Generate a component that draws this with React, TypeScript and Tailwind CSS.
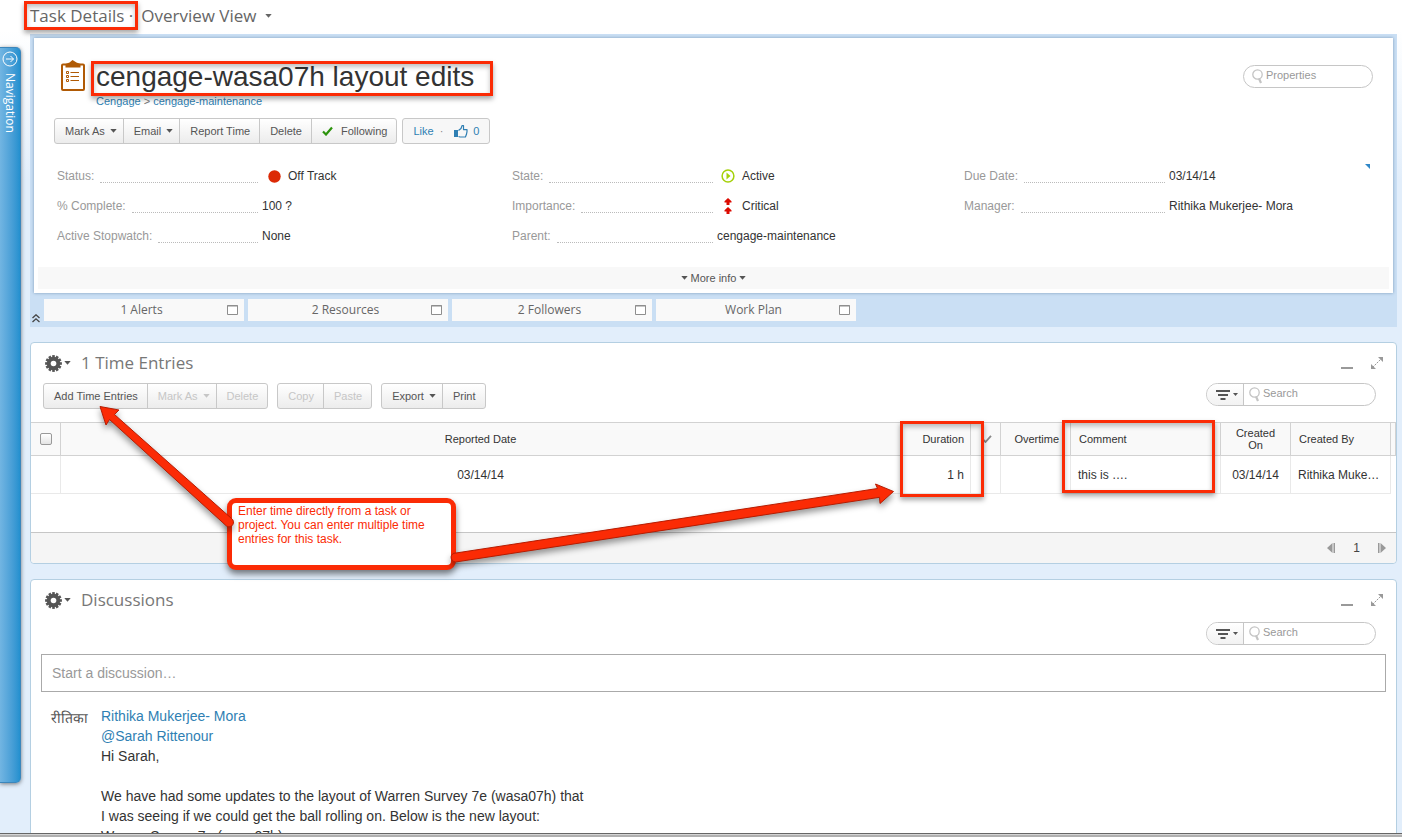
import type { ReactNode } from 'react';

const properties: { label: string; value: string; icon?: 'offTrack' | 'active' | 'critical' }[][] = [
  [
    { label: 'Status:', value: 'Off Track', icon: 'offTrack' },
    { label: '% Complete:', value: '100 ?' },
    { label: 'Active Stopwatch:', value: 'None' },
  ],
  [
    { label: 'State:', value: 'Active', icon: 'active' },
    { label: 'Importance:', value: 'Critical', icon: 'critical' },
    { label: 'Parent:', value: 'cengage-maintenance' },
  ],
  [
    { label: 'Due Date:', value: '03/14/14' },
    { label: 'Manager:', value: 'Rithika Mukerjee- Mora' },
  ],
];

const tabs = ['1 Alerts', '2 Resources', '2 Followers', 'Work Plan'];

function Caret({ className = '' }: { className?: string }) {
  return (
    <svg className={`shrink-0 ${className}`} width="7" height="4" viewBox="0 0 7 4" aria-hidden="true">
      <path d="M.300 0h6.400L3.500 3.700z" fill="currentColor" />
    </svg>
  );
}

function ValueIcon({ name }: { name: 'offTrack' | 'active' | 'critical' }) {
  if (name === 'offTrack') {
    return (
      <svg className="ml-[6px] mr-[7px] shrink-0" width="13" height="13" viewBox="0 0 13 13" aria-hidden="true">
        <circle cx="6.5" cy="6.5" r="6.2" fill="#dc2a06" />
      </svg>
    );
  }
  if (name === 'active') {
    return (
      <svg className="ml-1 mr-[7px] shrink-0" width="14" height="14" viewBox="0 0 14 14" aria-hidden="true">
        <circle cx="7" cy="7" r="5.9" fill="none" stroke="#a5d10a" strokeWidth="1.5" />
        <path d="M5.5 3.5v7l4-3.5z" fill="#a5d10a" />
      </svg>
    );
  }
  return (
    <svg className="ml-1 mr-[7px] shrink-0" width="14" height="16" viewBox="0 0 14 16" aria-hidden="true">
      <path
        d="M7 0l3.500 3.300v1.200h-2V7h-3V4.500h-2V3.300zM7 9l3.500 3.300v1.200h-2V16h-3v-2.500h-2v-1.200z"
        fill="#dc0a00"
      />
    </svg>
  );
}

function ButtonGroup({ children }: { children: ReactNode }) {
  return (
    <div className="flex h-[26px] divide-x divide-[#c8c8c8] overflow-hidden rounded-[3px] border border-[#c8c8c8] bg-linear-to-b from-white to-[#ececec]">
      {children}
    </div>
  );
}

function ToolButton({ children, caret, disabled }: { children: ReactNode; caret?: boolean; disabled?: boolean }) {
  return (
    <button
      type="button"
      disabled={disabled}
      className={`flex items-center whitespace-nowrap pl-[10px] text-[11px] ${caret ? 'gap-[5px] pr-[6px]' : 'pr-[9px]'} ${
        disabled ? 'text-[#c6c6c6]' : 'text-[#555]'
      }`}
    >
      {children}
      {caret && <Caret />}
    </button>
  );
}

function Lens() {
  return (
    <svg className="shrink-0" width="11" height="15" viewBox="0 0 11 15" aria-hidden="true">
      <circle cx="5.500" cy="5.500" r="4.700" fill="none" stroke="#c4c4c4" strokeWidth="1.300" />
      <path d="M7 9.500l2 4.500" stroke="#c4c4c4" strokeWidth="2.200" />
    </svg>
  );
}

function SearchBox({ label }: { label: string }) {
  return (
    <div className="flex h-[23px] w-[170px] overflow-hidden rounded-full border border-[#c6c6c6] bg-white">
      <button
        type="button"
        aria-label="Filter"
        className="flex w-[37px] items-center justify-center gap-[3px] border-r border-[#c6c6c6] bg-linear-to-b from-white to-[#f2f2f2] pl-1 text-[#555]"
      >
        <svg width="14" height="10" viewBox="0 0 14 10" aria-hidden="true">
          <path d="M0 1h14M2 5h10M4.500 9h5" stroke="currentColor" strokeWidth="2" />
        </svg>
        <svg width="5" height="3" viewBox="0 0 5 3" aria-hidden="true">
          <path d="M0 0h5L2.500 3z" fill="currentColor" />
        </svg>
      </button>
      <label className="flex min-w-0 flex-1 items-center gap-[3px] pl-[5px]">
        <Lens />
        <input
          type="text"
          aria-label={label}
          placeholder="Search"
          className="h-full w-full min-w-0 pb-1 text-[11px] outline-none placeholder:text-[#999]"
        />
      </label>
    </div>
  );
}

function Gear() {
  return (
    <svg width="17" height="17" viewBox="-8.500 -8.500 17 17" aria-hidden="true">
      {[0, 30, 60, 90, 120, 150].map((deg) => (
        <rect key={deg} x="-1.300" y="-8.400" width="2.600" height="16.800" fill="#555" transform={`rotate(${deg})`} />
      ))}
      <circle r="6.700" fill="#555" />
      <circle r="2.800" fill="#fff" />
    </svg>
  );
}

function PanelHeader({ title }: { title: string }) {
  return (
    <div className="flex h-10 items-center pl-[14px] pr-[13px]">
      <button type="button" aria-label={`${title} options`} className="flex items-center gap-[2px] text-[#555]">
        <Gear />
        <Caret />
      </button>
      <h2 className="ml-[10px] font-['Open_Sans',sans-serif] text-[17px] text-[#777]">{title}</h2>
      <button type="button" aria-label="Minimize" className="ml-auto mt-[10px] h-[2px] w-3 bg-[#999]" />
      <button type="button" aria-label="Expand" className="ml-[18px] text-[#999]">
        <svg width="12" height="12" viewBox="0 0 12 12" aria-hidden="true">
          <path d="M7 0h5v5zM0 7v5h5z" fill="currentColor" />
          <path d="M1.500 10.500l9-9" stroke="currentColor" strokeDasharray="2 1" />
        </svg>
      </button>
    </div>
  );
}

// Red frame drawn over the element it calls out
function Highlight({ className }: { className: string }) {
  return (
    <span
      aria-hidden="true"
      className={`pointer-events-none absolute z-10 border-3 border-[#fb2b05] shadow-[0_3px_5px_rgba(0,0,0,0.35),inset_0_3px_5px_rgba(0,0,0,0.25)] ${className}`}
    />
  );
}

function Navigation() {
  return (
    <aside className="mb-[50px] mt-[47px] w-[21px] shrink-0 rounded-r-[5px] border-y border-r border-[#3c86bb] bg-linear-to-r from-[#72b5e2] to-[#2290cf] shadow-[0_1px_4px_rgba(0,0,0,0.5)]">
      <button type="button" className="flex w-full flex-col items-center gap-[6px] pt-[3px] text-white">
        <svg width="16" height="16" viewBox="0 0 16 16" fill="none" stroke="currentColor" aria-hidden="true">
          <circle cx="8" cy="8" r="7" />
          <path d="M4 8h7.500M8.500 5l3 3-3 3" />
        </svg>
        <span className="font-['Open_Sans',sans-serif] text-[12px] leading-[14px] [writing-mode:vertical-rl]">
          Navigation
        </span>
      </button>
    </aside>
  );
}

function TaskSummary() {
  return (
    <section className="bg-[#cadff4] px-1 pb-[6px] pt-1">
      <div className="relative bg-white p-1 pt-[21px] shadow-[0_0_3px_rgba(70,110,150,0.6)]">
        <div className="flex items-start pl-[23px] pr-4">
          <svg className="mt-px shrink-0" width="24" height="31" viewBox="0 0 24 31" aria-hidden="true">
            <rect x="1" y="4.500" width="22" height="25.500" rx="1" fill="#fff" stroke="#b05a05" strokeWidth="2" />
            <path d="M4.500 7.500V4L8.500 2.500 11.500 0 15.500 2.500 19.500 4v3.500z" fill="#b05a05" />
            <path d="M9.500 12.500H18M9.500 16.500H18M9.500 20.500H18" stroke="#b05a05" />
            <path d="M5.500 11.500h2v2h-2zM5.500 15.500h2v2h-2zM5.500 19.500h2v2h-2z" fill="none" stroke="#b05a05" />
          </svg>
          <div className="ml-[11px]">
            <div className="relative">
              <h1 className="whitespace-nowrap text-[28px] leading-[35px] text-[#333]">cengage-wasa07h layout edits</h1>
              <Highlight className="-left-[5px] -right-[19px] top-[2px] h-[35px]" />
            </div>
            <p className="text-[11px] leading-[14px] text-[#777]">
              <a href="#" className="text-[#2f7fb3]">
                Cengage
              </a>{' '}
              &gt;{' '}
              <a href="#" className="text-[#2f7fb3]">
                cengage-maintenance
              </a>
            </p>
          </div>
          <label className="ml-auto mt-[6px] flex h-[23px] w-[130px] items-center gap-[3px] rounded-full border border-[#c6c6c6] pl-2 pr-3">
            <Lens />
            <input
              type="text"
              aria-label="Properties"
              placeholder="Properties"
              className="h-full w-full min-w-0 pb-1 text-[11px] outline-none placeholder:text-[#999]"
            />
          </label>
        </div>

        <div className="mt-[10px] flex gap-[5px] pl-4">
          <ButtonGroup>
            <ToolButton caret>Mark As</ToolButton>
            <ToolButton caret>Email</ToolButton>
            <ToolButton>Report Time</ToolButton>
            <ToolButton>Delete</ToolButton>
            <ToolButton>
              <svg className="mr-2" width="11" height="10" viewBox="0 0 11 10" aria-hidden="true">
                <path d="M1 5.500l3 3L10 1.500" fill="none" stroke="#2c930c" strokeWidth="2.200" />
              </svg>
              Following
            </ToolButton>
          </ButtonGroup>
          <button
            type="button"
            className="flex h-[26px] items-center rounded-[3px] border border-[#c8c8c8] bg-[#f7f7f7] px-[10px] text-[11px] text-[#2f7fb3]"
          >
            Like
            <span className="mx-[6px] text-[#888]">·</span>
            <svg className="mx-[5px]" width="14" height="13" viewBox="0 0 14 13" aria-hidden="true">
              <path d="M0 5h4v7H0z" fill="currentColor" />
              <path
                d="M4.500 5.500L7 3.500 8 .600h1.500v4H13v2l-.600 3-1 2.400H6L4.500 11.500"
                fill="none"
                stroke="currentColor"
                strokeWidth="1.200"
                strokeLinejoin="round"
              />
            </svg>
            0
          </button>
        </div>

        <div className="mt-[25px] grid grid-cols-[455fr_452fr_408fr] pl-[19px] pr-[17px] text-[12px] leading-[14px]">
          {properties.map((column, i) => (
            <dl key={i} className="space-y-4">
              {column.map((item) => (
                <div key={item.label} className="flex h-[14px] items-center">
                  <dt className="flex w-[201px] shrink-0 gap-[6px] text-[#999]">
                    {item.label}
                    <span className="flex-1 border-b border-dotted border-[#bbb]" />
                  </dt>
                  <dd className="flex items-center whitespace-nowrap pl-1 text-[#333]">
                    {item.icon && <ValueIcon name={item.icon} />}
                    {item.value}
                  </dd>
                </div>
              ))}
            </dl>
          ))}
        </div>
        <span className="absolute right-[23px] top-[126px] size-[5px] bg-[#2f87c8] [clip-path:polygon(0_0,100%_0,100%_100%)]" />

        <button
          type="button"
          className="mt-6 flex h-[22px] w-full items-center justify-center gap-[3px] bg-[#f8f8f8] text-[11px] text-[#555]"
        >
          <Caret />
          More info
          <Caret />
        </button>
      </div>

      <div className="mt-[6px] flex">
        <button type="button" aria-label="Collapse" className="w-[10px] self-end text-[#444]">
          <svg
            className="-ml-[2px] -mb-[2px] block"
            width="8"
            height="9"
            viewBox="0 0 8 9"
            fill="none"
            stroke="currentColor"
            aria-hidden="true"
          >
            <path d="M.500 4L4 .800 7.500 4M.500 8L4 4.800 7.500 8" strokeWidth="1.300" />
          </svg>
        </button>
        <div className="flex gap-1">
          {tabs.map((tab) => (
            <button
              key={tab}
              type="button"
              className="flex h-[22px] w-[200px] items-center bg-[#f9f9f9] pl-3 pr-[6px] font-['Open_Sans',sans-serif] text-[12px] text-[#666]"
            >
              <span className="flex-1">{tab}</span>
              <svg width="11" height="10" viewBox="0 0 11 10" aria-hidden="true">
                <path d="M.500.500h10v9H.500zM0 1h11" fill="#fff" stroke="#8e8e8e" />
              </svg>
            </button>
          ))}
        </div>
      </div>
    </section>
  );
}

function TimeEntries() {
  const th = 'border-y border-r border-[#d2d2d2] bg-[#f9f9f9] font-normal';
  const td = 'border-b border-r border-[#e9e9e9]';

  return (
    <section className="relative mt-[15px] rounded-[4px] border border-[#b4cfe2] bg-white">
      <PanelHeader title="1 Time Entries" />
      <div className="flex h-[39px] items-start gap-[9px] pl-3 pr-5">
        <ButtonGroup>
          <ToolButton>Add Time Entries</ToolButton>
          <ToolButton caret disabled>
            Mark As
          </ToolButton>
          <ToolButton disabled>Delete</ToolButton>
        </ButtonGroup>
        <ButtonGroup>
          <ToolButton disabled>Copy</ToolButton>
          <ToolButton disabled>Paste</ToolButton>
        </ButtonGroup>
        <ButtonGroup>
          <ToolButton caret>Export</ToolButton>
          <ToolButton>Print</ToolButton>
        </ButtonGroup>
        <div className="ml-auto">
          <SearchBox label="Search time entries" />
        </div>
      </div>

      <table className="w-full table-fixed border-separate border-spacing-0 text-[#333]">
        <colgroup>
          <col className="w-[30px]" />
          <col />
          <col className="w-[70px]" />
          <col className="w-[30px]" />
          <col className="w-[70px]" />
          <col className="w-[150px]" />
          <col className="w-[70px]" />
          <col className="w-[100px]" />
          <col className="w-[5px]" />
        </colgroup>
        <thead className="text-[11px] leading-[12px]">
          <tr className="h-[34px]">
            <th className={th}>
              <input
                type="checkbox"
                aria-label="Select all"
                className="ml-[9px] block size-3 appearance-none rounded-[2px] border border-[#999] bg-linear-to-b from-white to-[#e4e4e4]"
              />
            </th>
            <th className={th}>Reported Date</th>
            <th className={`relative pr-[6px] text-right ${th}`}>
              Duration
              <Highlight className="-left-px -top-[2px] h-[76px] w-[84px]" />
            </th>
            <th className={th} aria-label="Approved">
              <svg className="ml-[11px]" width="10" height="8" viewBox="0 0 10 8" aria-hidden="true">
                <path d="M1 4.500l2.500 2.500L9 .800" fill="none" stroke="#888" strokeWidth="1.800" />
              </svg>
            </th>
            <th className={`pr-[11px] text-right ${th}`}>Overtime</th>
            <th className={`relative pl-2 text-left ${th}`}>
              Comment
              <Highlight className="-left-[9px] -top-[3px] h-[73px] w-[153px]" />
            </th>
            <th className={`px-3 ${th}`}>Created On</th>
            <th className={`pl-2 text-left ${th}`}>Created By</th>
            <th className={th} />
          </tr>
        </thead>
        <tbody className="text-[12px]">
          <tr className="h-[38px]">
            <td className={td} />
            <td className={`text-center ${td}`}>03/14/14</td>
            <td className={`pr-[6px] text-right ${td}`}>1 h</td>
            <td className={td} />
            <td className={td} />
            <td className={`pl-[7px] ${td}`}>this is ….</td>
            <td className={`text-center ${td}`}>03/14/14</td>
            <td className={`whitespace-nowrap pl-[7px] ${td}`} title="Rithika Mukerjee- Mora">
              Rithika Muke…
            </td>
            <td />
          </tr>
        </tbody>
      </table>

      <div className="mt-[38px] flex h-[31px] items-center justify-end rounded-b-[4px] border-t border-[#c6c6c6] bg-[#f5f5f5] pr-[10px] text-[12px] text-[#444]">
        <button type="button" aria-label="Previous page" className="text-[#999]">
          <svg width="8" height="10" viewBox="0 0 8 10" aria-hidden="true">
            <path d="M5.500 0v10L0 5zM6.500 0H8v10H6.500z" fill="currentColor" />
          </svg>
        </button>
        <span className="mx-[18px]">1</span>
        <button type="button" aria-label="Next page" className="text-[#999]">
          <svg width="8" height="10" viewBox="0 0 8 10" aria-hidden="true">
            <path d="M2.500 0v10L8 5zM0 0h1.500v10H0z" fill="currentColor" />
          </svg>
        </button>
      </div>

      <p className="absolute left-[196px] top-[155px] z-20 h-[72px] w-[229px] rounded-[9px] border-5 border-[#fb2b05] bg-white pl-[6px] pr-4 pt-px text-[12px] leading-[14px] text-[#fb2b05] shadow-[0_4px_6px_rgba(0,0,0,0.5)]">
        Enter time directly from a task or project. You can enter multiple time entries for this task.
      </p>
      <svg
        className="pointer-events-none absolute left-0 top-0 z-30 overflow-visible drop-shadow-[0_4px_3px_rgba(0,0,0,0.4)]"
        width="900"
        height="240"
        viewBox="31 343 900 240"
        fill="#fb2b05"
        stroke="#b51c02"
        strokeLinejoin="round"
        aria-hidden="true"
      >
        <path d="M100 406.500L119 410 114.500 414.500 231.500 518.500A4.500 4.500 0 0 1 226.500 526L109.500 419.500 106 425z" />
        <path d="M893.500 491.500L880 503.500 879.500 497.300 455.500 562A4.500 4.500 0 0 1 454 553.300L877.500 488.500 875.500 484z" />
      </svg>
    </section>
  );
}

function Discussions() {
  return (
    <section className="mt-[15px] shrink-0 rounded-[4px] border border-[#b4cfe2] bg-white pb-6">
      <PanelHeader title="Discussions" />
      <div className="flex justify-end pr-5 pt-[2px]">
        <SearchBox label="Search discussions" />
      </div>
      <div className="px-[10px] pt-[9px]">
        <input
          type="text"
          aria-label="Start a discussion"
          placeholder="Start a discussion…"
          className="block h-[38px] w-full border border-[#aaa] px-[10px] text-[14px] outline-none placeholder:text-[#999]"
        />
      </div>
      <article className="flex pl-5 pt-[14px] text-[14px] leading-5 text-[#333]">
        <span lang="hi" className="w-[50px] shrink-0 pt-[2px] text-[#555]">
          रीतिका
        </span>
        <div className="max-w-[500px]">
          <a href="#" className="block text-[#2f7fb3]">
            Rithika Mukerjee- Mora
          </a>
          <a href="#" className="block text-[#2f7fb3]">
            @Sarah Rittenour
          </a>
          <p>Hi Sarah,</p>
          <p className="mt-5">
            We have had some updates to the layout of Warren Survey 7e (wasa07h) that
            <br />I was seeing if we could get the ball rolling on. Below is the new layout:
            <br />
            Warren Survey 7e (wasa07h)
          </p>
        </div>
      </article>
    </section>
  );
}

export default function App() {
  return (
    <div className="flex h-screen flex-col overflow-hidden bg-[linear-gradient(to_bottom,#fff_30px,#e2eefb_180px)] font-['Liberation_Sans',Arial,sans-serif]">
      <div className="flex min-h-0 flex-1">
        <Navigation />
        <main className="ml-[9px] mr-[5px] min-w-0 flex-1">
          <header className="flex h-[34px] items-start font-['Open_Sans',sans-serif] text-[17px] leading-8 text-[#666]">
            <div className="relative">
              Task Details ·
              <Highlight className="-left-[6px] -right-[5px] top-px h-[29px]" />
            </div>
            <button type="button" className="ml-2 flex items-center gap-2">
              Overview View
              <Caret />
            </button>
          </header>
          <TaskSummary />
          <TimeEntries />
          <Discussions />
        </main>
      </div>
      <div className="relative z-40 h-1 shrink-0 border-t border-[#666] bg-[#b0b0b0]">
        <div className="h-px bg-[#d4d4d4]" />
      </div>
    </div>
  );
}
